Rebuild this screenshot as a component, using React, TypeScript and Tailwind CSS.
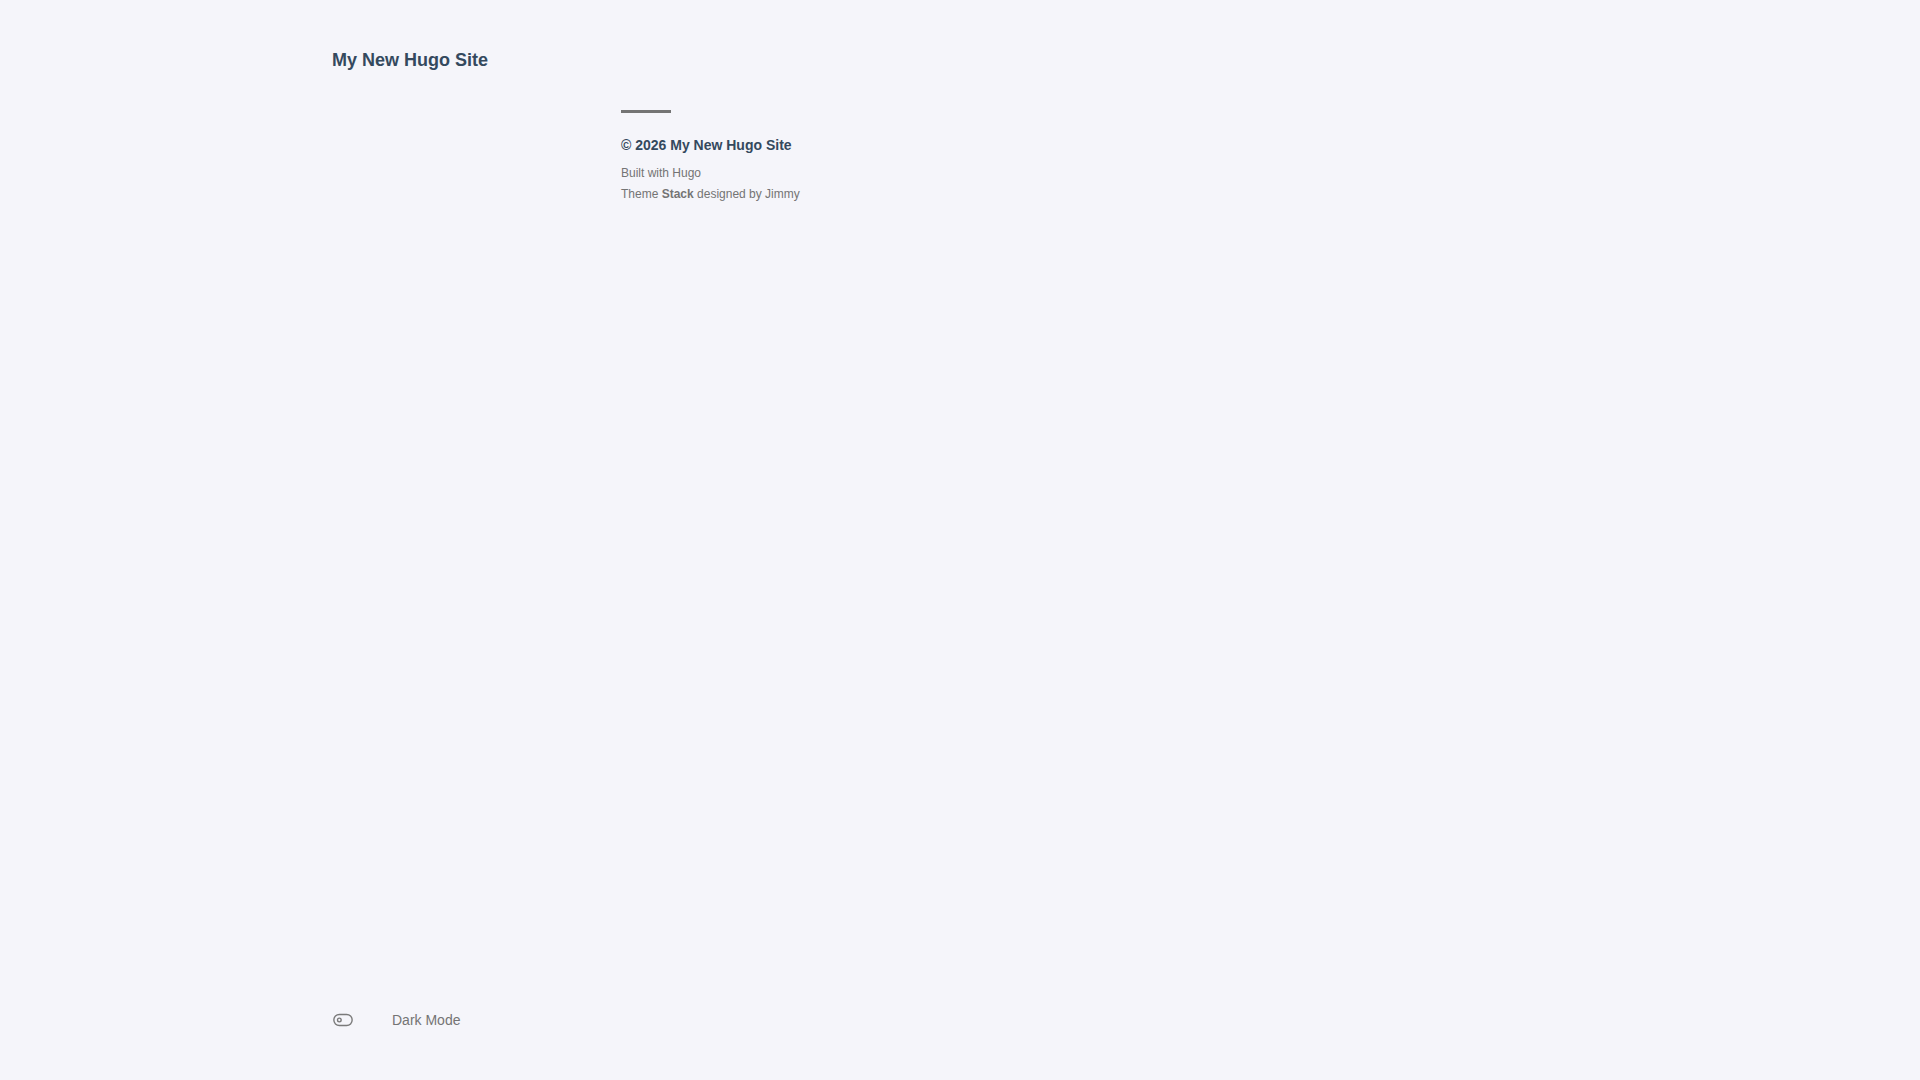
import React from "react";

export default function App() {
  return (
    <div
      className="min-h-screen w-full bg-[#f5f5fa]"
      style={{ fontFamily: '"Liberation Sans", Arial, sans-serif' }}
    >
      <div className="mx-auto flex w-[1256px]">
        <aside className="flex h-screen w-[289px] shrink-0 flex-col justify-between pt-[47px] pb-[49px]">
          <h1 className="text-[18px] font-bold leading-[27px] text-[#34495e]">
            My New Hugo Site
          </h1>
          <div className="flex items-center gap-[38px] text-[14px] leading-[20px] text-[#747474]">
            <svg
              width="22"
              height="22"
              viewBox="0 0 24 24"
              fill="none"
              stroke="#7a7a7a"
              strokeWidth="1.5"
              strokeLinecap="round"
              strokeLinejoin="round"
            >
              <circle cx="8" cy="12" r="2" />
              <rect x="2" y="6" width="20" height="12" rx="6" />
            </svg>
            <span>Dark Mode</span>
          </div>
        </aside>
        <main className="flex-1 pt-[110px]">
          <footer>
            <div className="mb-[20px] h-[3px] w-[50px] bg-[#747474]" />
            <div className="mb-[5px] text-[14px] font-bold leading-[24.5px] text-[#34495e]">
              © 2026 My New Hugo Site
            </div>
            <div className="text-[12px] leading-[21px] text-[#747474]">
              <div>Built with Hugo</div>
              <div>
                Theme <b className="font-bold">Stack</b> designed by Jimmy
              </div>
            </div>
          </footer>
        </main>
      </div>
    </div>
  );
}
